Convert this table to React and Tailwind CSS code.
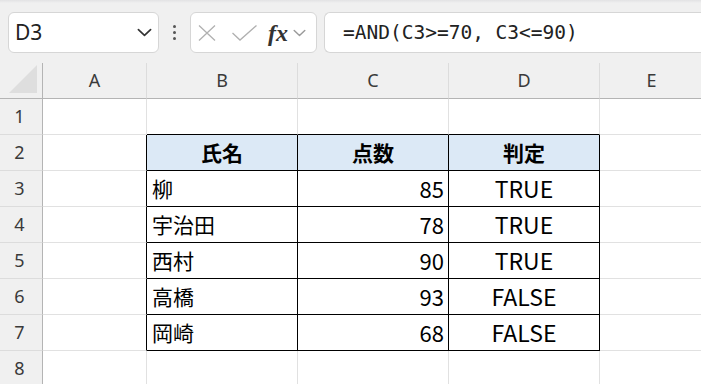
import React from "react";

const COLS = ["A", "B", "C", "D", "E"];

const DATA = {
  2: { B: "氏名", C: "点数", D: "判定" },
  3: { B: "柳", C: "85", D: "TRUE" },
  4: { B: "宇治田", C: "78", D: "TRUE" },
  5: { B: "西村", C: "90", D: "TRUE" },
  6: { B: "高橋", C: "93", D: "FALSE" },
  7: { B: "岡崎", C: "68", D: "FALSE" },
};

const cellFont = { fontFamily: '"Noto Sans CJK JP", "Noto Sans", sans-serif' };
const uiFont = { fontFamily: '"Noto Sans", "Liberation Sans", sans-serif' };

function Chevron({ className }) {
  return (
    <svg viewBox="0 0 16 9" className={className} fill="none" stroke="currentColor" strokeWidth="1.8" strokeLinecap="round" strokeLinejoin="round">
      <path d="M1.5 1.5 L8 7.5 L14.5 1.5" />
    </svg>
  );
}

function Toolbar() {
  return (
    <div className="h-[63px] bg-[#f0f0f0] flex items-start pt-[12px] pl-[8px] relative">
      <div className="absolute top-0 left-0 right-0 h-[3px] bg-gradient-to-b from-[#e2e2e4] to-[#f0f0f0]" />
      {/* name box */}
      <div className="w-[151px] h-[41px] bg-white border border-[#d6d6d6] rounded-[6px] flex items-center pl-[6px] pr-[6px]">
        <span className="text-[21px] text-[#222] flex-1 leading-none" style={uiFont}>D3</span>
        <Chevron className="w-[15px] h-[9px] text-[#333]" />
      </div>
      {/* kebab */}
      <div className="w-[31px] h-[41px] flex flex-col items-center justify-center gap-[3px]">
        <span className="w-[3px] h-[3px] bg-[#555] rounded-full" />
        <span className="w-[3px] h-[3px] bg-[#555] rounded-full" />
        <span className="w-[3px] h-[3px] bg-[#555] rounded-full" />
      </div>
      {/* cancel / enter / fx */}
      <div className="w-[127px] h-[41px] bg-white border border-[#d6d6d6] rounded-[6px] flex items-center pl-[7px]">
        <svg viewBox="0 0 18 16" className="w-[18px] h-[16px]" fill="none" stroke="#b0b0b0" strokeWidth="1.3">
          <path d="M1 0.5 L17 15.5 M17 0.5 L1 15.5" />
        </svg>
        <svg viewBox="0 0 25 16" className="w-[25px] h-[16px] ml-[16px]" fill="none" stroke="#b0b0b0" strokeWidth="1.3">
          <path d="M0.5 8 L8 15 L24.5 0.5" />
        </svg>
        <span className="ml-[11px] text-[24px] italic font-bold text-[#333] leading-none" style={{ fontFamily: '"Liberation Serif", "DejaVu Serif", serif' }}>fx</span>
        <Chevron className="w-[13px] h-[8px] ml-[5px] text-[#9a9a9a]" />
      </div>
      {/* formula bar */}
      <div className="flex-1 ml-[7px] h-[41px] bg-white border border-[#d6d6d6] border-r-0 rounded-l-[6px] flex items-center pl-[18px]">
        <span className="text-[19.5px] text-[#222] leading-none" style={{ fontFamily: '"DejaVu Sans Mono", "Liberation Mono", monospace' }}>
          =AND(C3&gt;=70, C3&lt;=90)
        </span>
      </div>
    </div>
  );
}

function cellBorder(r, c) {
  const inTable = r >= 2 && r <= 7 && (c === "B" || c === "C" || c === "D");
  const rightBlack = inTable || (c === "A" && r >= 2 && r <= 7);
  const bottomBlack = inTable || (r === 1 && (c === "B" || c === "C" || c === "D"));
  const right = rightBlack ? "border-r-black" : "border-r-[#e1e1e1]";
  const bottom = bottomBlack ? "border-b-black" : "border-b-[#e1e1e1]";
  return `${right} ${bottom}`;
}

function Cell({ r, c }) {
  const v = DATA[r] ? DATA[r][c] : undefined;
  const isHead = r === 2;
  let align = "justify-center";
  let size = "text-[21px]";
  if (!isHead && c === "B") align = "justify-start pl-[5px]";
  if (!isHead && c === "C") {
    align = "justify-end pr-[4px]";
    size = "text-[22px]";
  }
  if (!isHead && c === "D") size = "text-[23px]";
  const bg = isHead && (c === "B" || c === "C" || c === "D") ? "bg-[#dce9f6]" : "bg-white";
  return (
    <div className={`border-r border-b ${cellBorder(r, c)} ${bg} flex items-center ${align} ${size} text-black ${isHead ? "font-bold" : ""}`} style={cellFont}>
      {v ? <span>{v}</span> : null}
    </div>
  );
}

export default function App() {
  const rows = [1, 2, 3, 4, 5, 6, 7, 8];
  return (
    <div className="w-[701px] h-[384px] overflow-hidden bg-white">
      <Toolbar />
      <div className="grid grid-cols-[43px_104px_151px_151px_151px_104px] grid-rows-[36px_repeat(8,36px)]">
        {/* select-all corner */}
        <div className="bg-[#f0f0f0] border-r border-b border-r-[#b4b4b4] border-b-[#b4b4b4] flex items-end justify-end pr-[5px] pb-[5px]">
          <svg viewBox="0 0 28 28" className="w-[28px] h-[28px]">
            <path d="M28 0 L28 28 L0 28 Z" fill="#dedede" />
          </svg>
        </div>
        {COLS.map((c) => (
          <div key={c} className="bg-[#f0f0f0] border-r border-b border-r-[#dcdcdc] border-b-[#b4b4b4] flex items-center justify-center text-[18px] text-[#3a3a3a]" style={uiFont}>
            {c}
          </div>
        ))}
        {rows.map((r) => (
          <React.Fragment key={r}>
            <div className="bg-[#f0f0f0] border-r border-b border-r-[#b4b4b4] border-b-[#dcdcdc] flex items-center justify-center text-[18px] text-[#3a3a3a] pr-[3px]" style={uiFont}>
              {r}
            </div>
            {COLS.map((c) => (
              <Cell key={c} r={r} c={c} />
            ))}
          </React.Fragment>
        ))}
      </div>
    </div>
  );
}
